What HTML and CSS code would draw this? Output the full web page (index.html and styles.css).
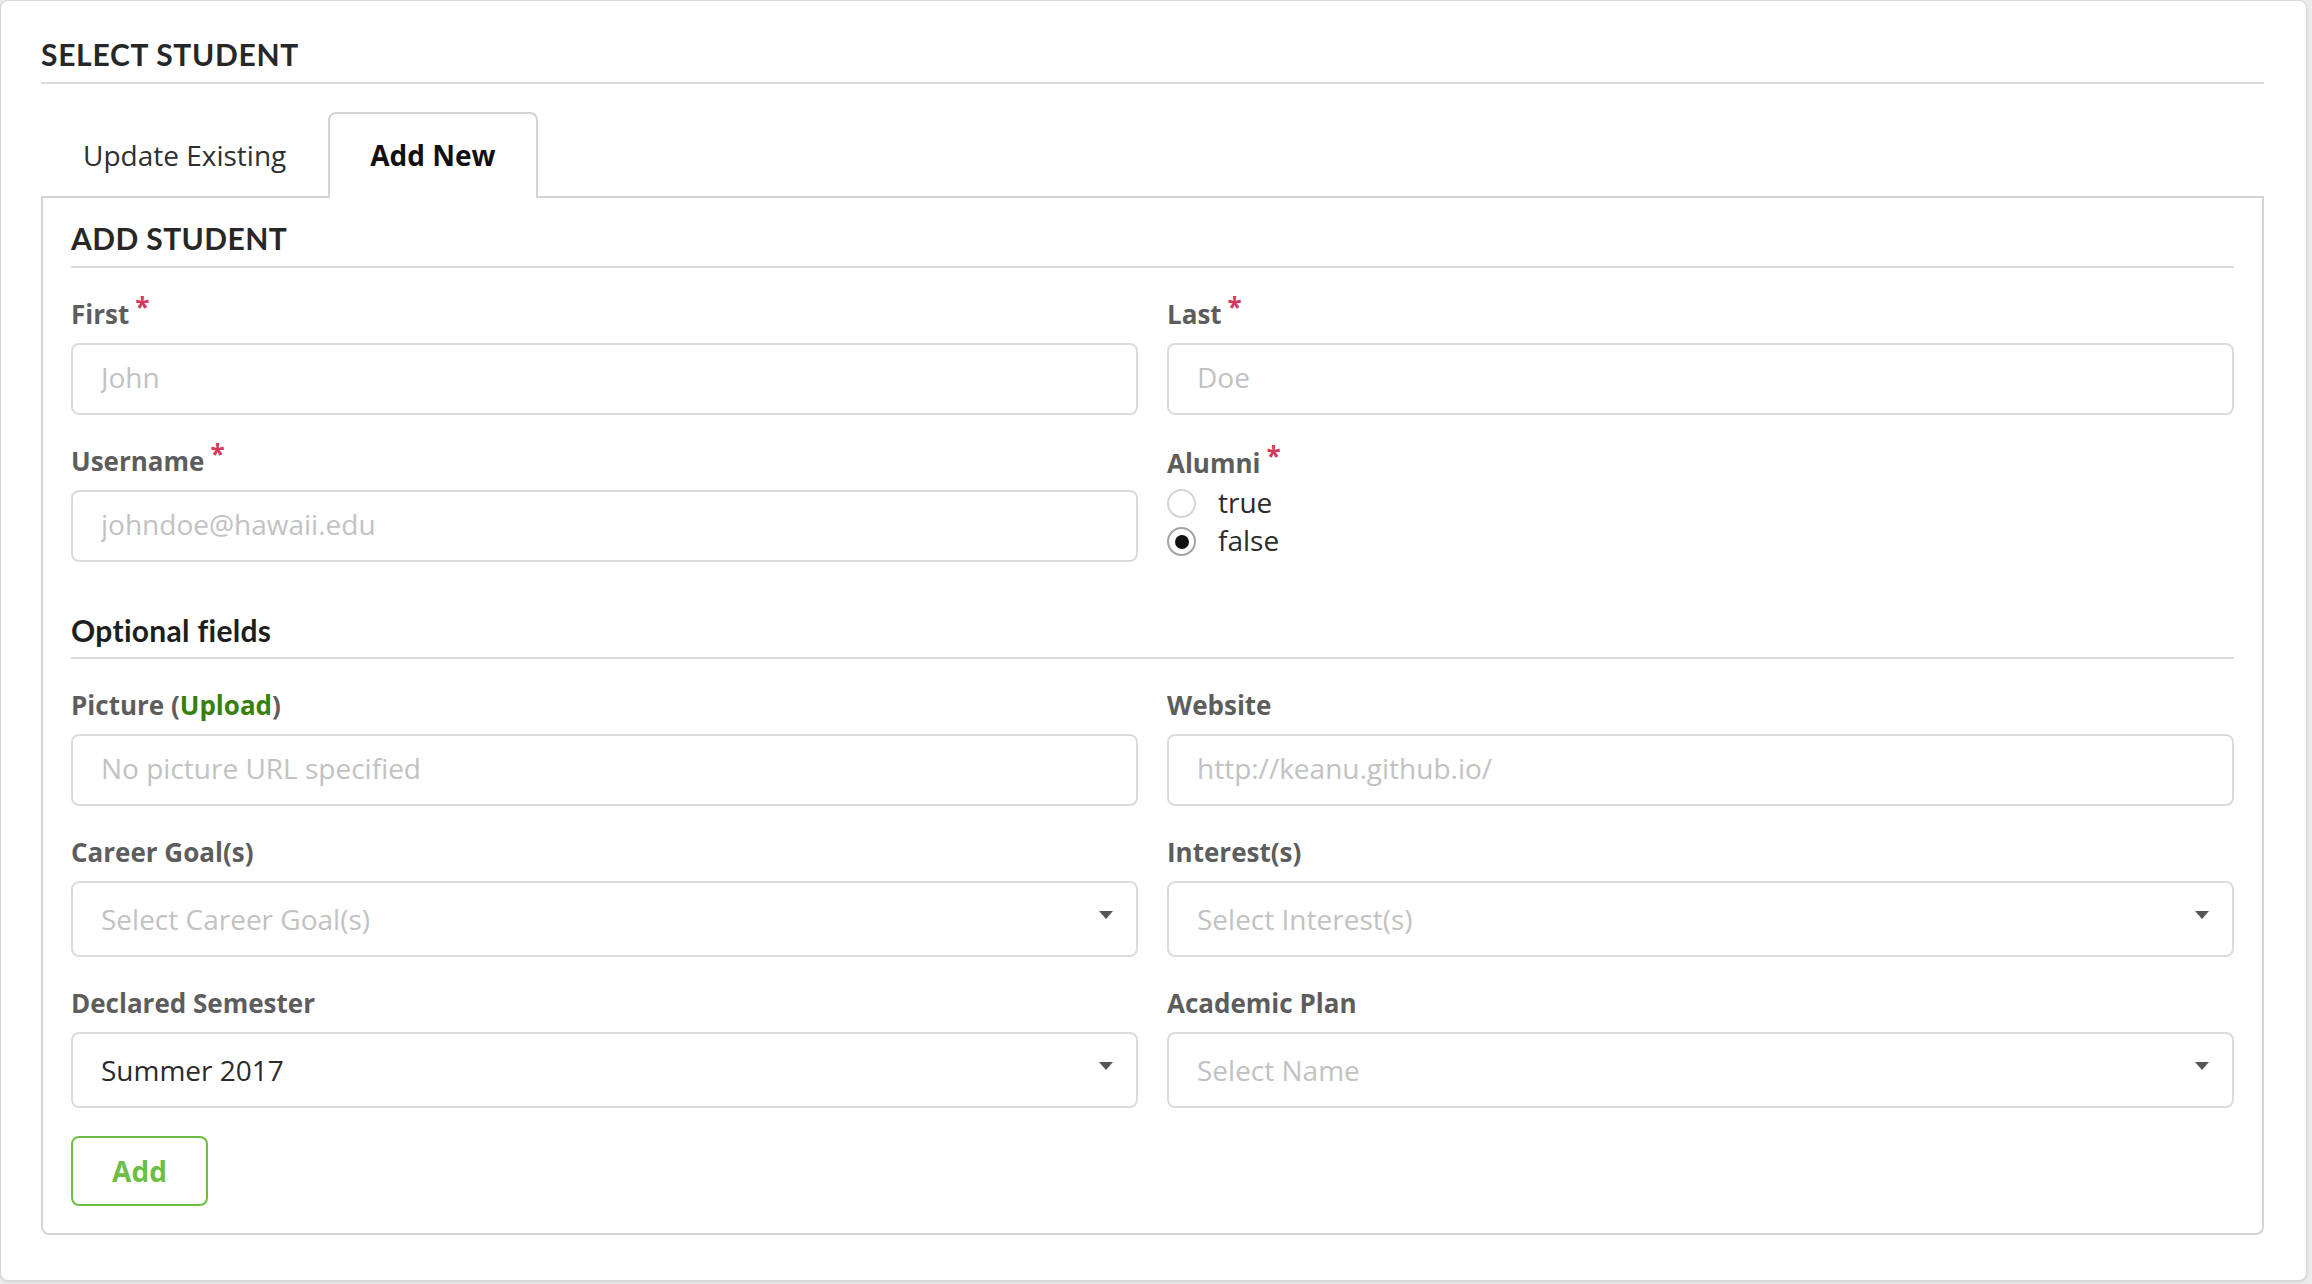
FILE: index.html
```html
<!DOCTYPE html>
<html lang="en">
<head>
<meta charset="utf-8">
<title>Select Student</title>
<link rel="stylesheet" href="styles.css">
</head>
<body>
<div class="card">
  <h2 class="page-header">SELECT STUDENT</h2>
  <div class="tabs">
    <div class="tab">Update Existing</div>
    <div class="tab active">Add New</div>
  </div>
  <div class="segment">
    <h3 class="form-header">ADD STUDENT</h3>
    <div class="grid">
      <div class="field">
        <label class="label">First<span class="req">*</span></label>
        <input class="input" type="text" placeholder="John">
      </div>
      <div class="field">
        <label class="label">Last<span class="req">*</span></label>
        <input class="input" type="text" placeholder="Doe">
      </div>
      <div class="field">
        <label class="label">Username<span class="req">*</span></label>
        <input class="input" type="text" placeholder="johndoe@hawaii.edu">
      </div>
      <div class="field">
        <label class="label label-alumni">Alumni<span class="req">*</span></label>
        <div class="radio-row"><span class="radio"></span><span class="radio-text">true</span></div>
        <div class="radio-row"><span class="radio checked"></span><span class="radio-text">false</span></div>
      </div>
      <h4 class="section-header">Optional fields</h4>
      <div class="field">
        <label class="label">Picture (<span class="upload">Upload</span>)</label>
        <input class="input" type="text" placeholder="No picture URL specified">
      </div>
      <div class="field">
        <label class="label">Website</label>
        <input class="input" type="text" placeholder="http://keanu.github.io/">
      </div>
      <div class="field">
        <label class="label">Career Goal(s)</label>
        <div class="dropdown"><span class="dd-text placeholder">Select Career Goal(s)</span><span class="caret"></span></div>
      </div>
      <div class="field">
        <label class="label">Interest(s)</label>
        <div class="dropdown"><span class="dd-text placeholder">Select Interest(s)</span><span class="caret"></span></div>
      </div>
      <div class="field">
        <label class="label">Declared Semester</label>
        <div class="dropdown"><span class="dd-text">Summer 2017</span><span class="caret"></span></div>
      </div>
      <div class="field">
        <label class="label">Academic Plan</label>
        <div class="dropdown"><span class="dd-text placeholder">Select Name</span><span class="caret"></span></div>
      </div>
    </div>
    <button class="btn-add" type="button">Add</button>
  </div>
</div>
</body>
</html>
```
FILE: styles.css
```css
html, body {
  margin: 0;
  padding: 0;
}
body {
  background: #ececec;
  font-family: "Open Sans", "Liberation Sans", sans-serif;
  color: #333333;
  width: 2312px;
  height: 1284px;
  overflow: hidden;
}
.card {
  box-sizing: border-box;
  width: 2307px;
  height: 1281px;
  background: #ffffff;
  border: 1px solid #d8d8d8;
  border-radius: 8px;
  box-shadow: 0 1px 3px rgba(0, 0, 0, 0.12);
  padding: 35px 42px 43px 40px;
}
.page-header,
.form-header,
.section-header {
  margin: 0;
  font-family: Lato, "Open Sans", sans-serif;
  font-weight: 700;
  font-size: 30px;
  line-height: 36px;
  letter-spacing: 0.4px;
  color: #272727;
  padding-bottom: 10px;
  border-bottom: 2px solid #dcdcdd;
}
.page-header {
  letter-spacing: 0.7px;
}
.tabs {
  display: flex;
  margin-top: 28px;
  margin-bottom: -2px;
}
.tab {
  box-sizing: border-box;
  height: 86px;
  padding: 22px 40px 0 40px;
  border: 2px solid transparent;
  border-bottom: none;
  font-size: 28px;
  line-height: 38px;
  color: #2f2f2f;
}
.tab.active {
  position: relative;
  z-index: 1;
  background: #ffffff;
  border-color: #d4d4d5;
  border-radius: 8px 8px 0 0;
  font-weight: 700;
  color: #111111;
}
.segment {
  border: 2px solid #d4d4d5;
  border-radius: 0 0 8px 8px;
  padding: 22px 28px 27px 28px;
}
.grid {
  display: grid;
  grid-template-columns: 1fr 1fr;
  column-gap: 29px;
  row-gap: 29px;
  margin-top: 29px;
}
.field {
  display: flex;
  flex-direction: column;
  min-width: 0;
}
.label {
  display: block;
  font-size: 26px;
  line-height: 34px;
  font-weight: 700;
  color: #5d5d5d;
  margin-bottom: 12px;
}
.label-alumni {
  margin-top: 2px;
  margin-bottom: 3px;
}
.req {
  color: #d2395b;
  margin-left: 6px;
  line-height: 0;
  vertical-align: 7px;
}
.upload {
  color: #37800f;
}
.input {
  box-sizing: border-box;
  width: 100%;
  height: 72px;
  margin: 0;
  padding: 15px 28px 19px 28px;
  border: 2px solid #dcdcdc;
  border-radius: 8px;
  font-family: "Open Sans", "Liberation Sans", sans-serif;
  font-size: 28px;
  line-height: 34px;
  color: #333333;
  background: #ffffff;
  outline: none;
}
.input::placeholder {
  color: #c2c2c2;
  opacity: 1;
}
.radio-row {
  display: flex;
  align-items: flex-start;
  height: 38px;
}
.radio {
  box-sizing: border-box;
  width: 29px;
  height: 29px;
  margin-top: 6px;
  border: 2px solid #d4d4d5;
  border-radius: 50%;
  display: flex;
  align-items: center;
  justify-content: center;
  background: #ffffff;
}
.radio.checked {
  border-color: #a3a3a3;
}
.radio.checked::after {
  content: "";
  width: 14px;
  height: 14px;
  border-radius: 50%;
  background: #111111;
}
.radio-text {
  margin-left: 22px;
  font-size: 28px;
  line-height: 38px;
  color: #2b2b2b;
}
.section-header {
  grid-column: 1 / -1;
  margin-top: 21px;
  padding-bottom: 9px;
  letter-spacing: 0.3px;
  color: #1e1e1e;
}
.dropdown {
  box-sizing: border-box;
  height: 76px;
  display: flex;
  justify-content: space-between;
  align-items: flex-start;
  padding: 19px 23px 19px 28px;
  border: 2px solid #dcdcdc;
  border-radius: 8px;
  background: #ffffff;
}
.dd-text {
  font-size: 28px;
  line-height: 34px;
  color: #2b2b2b;
  white-space: nowrap;
}
.dd-text.placeholder {
  color: #c2c2c2;
}
.caret {
  width: 0;
  height: 0;
  margin-top: 9px;
  border-left: 7px solid transparent;
  border-right: 7px solid transparent;
  border-top: 8px solid #555555;
}
.btn-add {
  display: block;
  box-sizing: border-box;
  width: 137px;
  height: 70px;
  margin-top: 28px;
  padding: 0;
  border: 2px solid #6cbf45;
  border-radius: 8px;
  background: #ffffff;
  color: #6cbf45;
  font-family: "Open Sans", "Liberation Sans", sans-serif;
  font-weight: 700;
  font-size: 28px;
  line-height: 34px;
  cursor: pointer;
}
```
